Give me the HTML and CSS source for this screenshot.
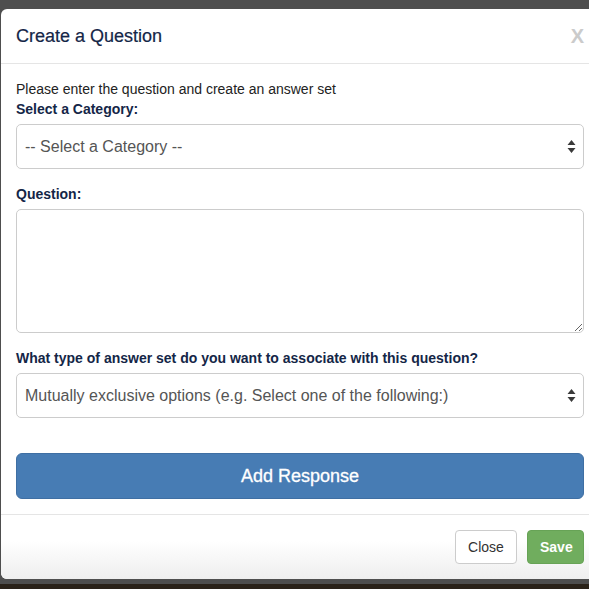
FILE: index.html
```html
<!DOCTYPE html>
<html>
<head>
<meta charset="utf-8">
<link rel="stylesheet" href="styles.css">
</head>
<body>
<div class="modal">
  <div class="modal-header">
    <h4 class="modal-title">Create a Question</h4>
    <span class="close">X</span>
  </div>
  <div class="modal-body">
    <p class="intro">Please enter the question and create an answer set</p>
    <div class="form-group">
      <label class="label">Select a Category:</label>
      <div class="select">
        <span>-- Select a Category --</span>
        <svg class="arrows" width="9" height="13" viewBox="0 0 9 13"><path d="M4.5 0 L8.5 5 L0.5 5 Z M0.5 8 L8.5 8 L4.5 13 Z" fill="#3a3a3a"/></svg>
      </div>
    </div>
    <div class="form-group">
      <label class="label">Question:</label>
      <textarea class="textarea"></textarea>
    </div>
    <div class="form-group">
      <label class="label">What type of answer set do you want to associate with this question?</label>
      <div class="select">
        <span>Mutually exclusive options (e.g. Select one of the following:)</span>
        <svg class="arrows" width="9" height="13" viewBox="0 0 9 13"><path d="M4.5 0 L8.5 5 L0.5 5 Z M0.5 8 L8.5 8 L4.5 13 Z" fill="#3a3a3a"/></svg>
      </div>
    </div>
    <button class="btn-add">Add Response</button>
  </div>
  <div class="modal-footer">
    <button class="btn btn-default">Close</button>
    <button class="btn btn-success">Save</button>
  </div>
</div>
<div class="backdrop-bottom"></div>
</body>
</html>
```

FILE: styles.css
```css
html, body {
  margin: 0;
  padding: 0;
  height: 589px;
  overflow: hidden;
}
body {
  background: #4e4e4e;
  font-family: "Liberation Sans", Arial, sans-serif;
  display: flex;
  flex-direction: column;
}
.modal {
  margin: 9px 0 0 1px;
  width: 598px;
  flex: none;
  background: #fff;
  border-radius: 6px;
  box-sizing: border-box;
  overflow: hidden;
}
.modal-header {
  display: flex;
  align-items: center;
  justify-content: space-between;
  padding: 15px;
  border-bottom: 1px solid #e5e5e5;
}
.modal-title {
  margin: 0;
  font-size: 18px;
  line-height: 24px;
  font-weight: normal;
  color: #142647;
  -webkit-text-stroke: 0.2px #142647;
}
.close {
  font-size: 20px;
  font-weight: bold;
  color: #cbcbcb;
  line-height: 24px;
}
.modal-body {
  padding: 15px;
  display: flex;
  flex-direction: column;
}
.intro {
  margin: 0;
  font-size: 14px;
  line-height: 20px;
  color: #222;
}
.form-group {
  display: flex;
  flex-direction: column;
  margin-bottom: 15px;
}
.label {
  font-size: 14px;
  line-height: 20px;
  font-weight: bold;
  color: #142647;
  margin-bottom: 5px;
}
.select {
  height: 45px;
  box-sizing: border-box;
  border: 1px solid #cccccc;
  border-radius: 5px;
  display: flex;
  align-items: center;
  justify-content: space-between;
  padding: 0 7px 0 8px;
  font-size: 16px;
  color: #555;
}
.arrows {
  display: block;
}
.textarea {
  height: 124px;
  box-sizing: border-box;
  border: 1px solid #cccccc;
  border-radius: 5px;
  margin: 0;
  font-family: inherit;
  font-size: 16px;
}
.btn-add {
  margin-top: 20px;
  height: 46px;
  background: #477cb4;
  border: 1px solid #3f6fa3;
  border-radius: 6px;
  color: #fff;
  font-family: inherit;
  font-size: 18px;
  -webkit-text-stroke: 0.3px #fff;
}
.modal-footer {
  display: flex;
  justify-content: flex-end;
  gap: 10px;
  padding: 15px;
  border-top: 1px solid #e5e5e5;
  background: linear-gradient(#fff 40%, #eeeeee 100%);
}
.btn {
  height: 34px;
  box-sizing: border-box;
  border-radius: 4px;
  font-family: inherit;
  font-size: 14px;
  padding: 0 12px;
}
.btn-default {
  width: 62px;
  background: #fff;
  border: 1px solid #cccccc;
  color: #333;
}
.btn-success {
  width: 57px;
  background: #70ad5e;
  border: 1px solid #67a356;
  color: #fff;
  font-weight: bold;
}
.backdrop-bottom {
  margin-top: 5px;
  flex: 1;
  background: #2a2219;
}
```
